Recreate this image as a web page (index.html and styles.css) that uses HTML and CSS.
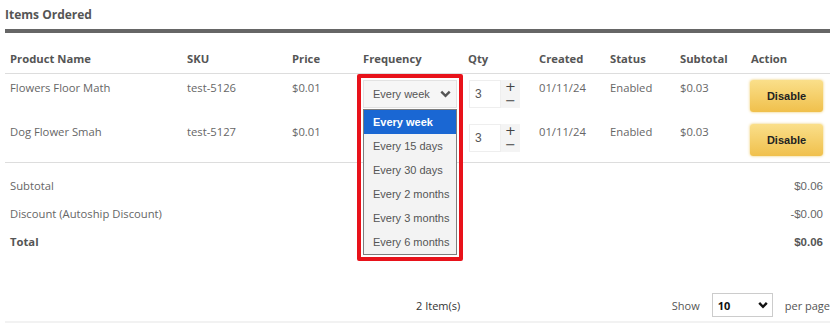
FILE: index.html
```html
<!DOCTYPE html>
<html lang="en">
<head>
    <meta charset="UTF-8">
    <meta name="viewport" content="width=device-width, initial-scale=1.0">
    <title>Items Ordered</title>
    <link rel="stylesheet" href="styles.css">
</head>
<body>

    <section class="items">
        <h2 class="items-title">Items Ordered</h2>

        <table class="items-table">
            <colgroup>
                <col style="width: 177px">
                <col style="width: 105px">
                <col style="width: 71px">
                <col style="width: 105px">
                <col style="width: 71px">
                <col style="width: 71px">
                <col style="width: 70px">
                <col style="width: 71px">
                <col style="width: 84px">
            </colgroup>
            <thead>
                <tr>
                    <th>Product Name</th>
                    <th>SKU</th>
                    <th>Price</th>
                    <th>Frequency</th>
                    <th>Qty</th>
                    <th>Created</th>
                    <th>Status</th>
                    <th>Subtotal</th>
                    <th>Action</th>
                </tr>
            </thead>
            <tbody>
                <tr>
                    <td>Flowers Floor Math</td>
                    <td>test-5126</td>
                    <td>$0.01</td>
                    <td class="freq-cell">
                        <div class="freq-pick">
                            <div class="freq-select">
                                <span>Every week</span>
                                <svg width="11" height="8" viewBox="0 0 11 8"><path d="M1.3 1.6 L5.5 5.8 L9.7 1.6" fill="none" stroke="#555" stroke-width="2.4"/></svg>
                            </div>
                            <ul class="freq-list">
                                <li class="active">Every week</li>
                                <li>Every 15 days</li>
                                <li>Every 30 days</li>
                                <li>Every 2 months</li>
                                <li>Every 3 months</li>
                                <li>Every 6 months</li>
                            </ul>
                            <div class="highlight"></div>
                        </div>
                    </td>
                    <td class="qty-cell">
                        <div class="qty">
                            <span class="qty-input">3</span>
                            <span class="qty-step"><span>+</span><span>&minus;</span></span>
                        </div>
                    </td>
                    <td>01/11/24</td>
                    <td>Enabled</td>
                    <td>$0.03</td>
                    <td class="action-cell"><button class="btn-disable">Disable</button></td>
                </tr>
                <tr>
                    <td>Dog Flower Smah</td>
                    <td>test-5127</td>
                    <td>$0.01</td>
                    <td></td>
                    <td class="qty-cell">
                        <div class="qty">
                            <span class="qty-input">3</span>
                            <span class="qty-step"><span>+</span><span>&minus;</span></span>
                        </div>
                    </td>
                    <td>01/11/24</td>
                    <td>Enabled</td>
                    <td>$0.03</td>
                    <td class="action-cell"><button class="btn-disable">Disable</button></td>
                </tr>
            </tbody>
        </table>

        <div class="totals">
            <div class="totals-row"><span>Subtotal</span><span class="amount">$0.06</span></div>
            <div class="totals-row"><span>Discount (Autoship Discount)</span><span class="amount">-$0.00</span></div>
            <div class="totals-row total"><span>Total</span><span class="amount">$0.06</span></div>
        </div>

        <div class="pager">
            <span class="pager-count">2 Item(s)</span>
            <div class="pager-size">
                <span>Show</span>
                <div class="pager-select">
                    <span>10</span>
                    <svg width="10" height="8" viewBox="0 0 10 8"><path d="M1.2 1.8 L5 5.8 L8.8 1.8" fill="none" stroke="#111" stroke-width="2.4"/></svg>
                </div>
                <span>per page</span>
            </div>
        </div>
        <div class="bottom-band"></div>
    </section>

</body>
</html>
```

FILE: styles.css
```css
body {
    font-family: "Open Sans", Arial, sans-serif;
    margin: 0;
    padding: 0;
    color: #666;
    background: #fff;
    font-size: 11.25px;
}

.items {
    padding: 0 8px 0 5px;
}

.items-title {
    margin: 0;
    font-size: 12px;
    font-weight: bold;
    line-height: 29px;
    color: #555;
    border-bottom: 4px solid #666;
}

.items-table {
    width: 825px;
    table-layout: fixed;
    border-collapse: collapse;
}

.items-table th {
    text-align: left;
    font-weight: bold;
    color: #555;
    padding: 18px 0 6px 5px;
    line-height: 16px;
    border-bottom: 1px solid #ddd;
}

.items-table td {
    vertical-align: top;
    padding: 6px 0 0 5px;
    height: 38px;
    line-height: 16px;
    white-space: nowrap;
}

.items-table tbody tr:last-child td {
    border-bottom: 1px solid #ddd;
}

.freq-pick {
    position: relative;
    width: 94px;
}

.freq-select {
    height: 26px;
    border: 1px solid #e2e2e2;
    background: #f6f6f6;
    display: flex;
    align-items: center;
    justify-content: space-between;
    padding: 0 5px 0 9px;
    font-family: Arial, "Liberation Sans", sans-serif;
    color: #555;
    font-size: 11px;
}

.freq-list {
    position: absolute;
    left: 0;
    top: 29px;
    width: 92px;
    margin: 0;
    padding: 0;
    list-style: none;
    border: 1px solid #7d7d7d;
    background: #f3f3f3;
    z-index: 2;
    font-family: Arial, "Liberation Sans", sans-serif;
    color: #555;
    font-size: 11px;
}

.freq-list li {
    height: 24px;
    line-height: 24px;
    padding-left: 9px;
}

.freq-list li.active {
    background: #1a67d3;
    color: #fff;
    font-weight: bold;
}

.highlight {
    position: absolute;
    left: -6px;
    top: -6px;
    width: 98px;
    height: 179px;
    border: 4px solid #e8121a;
    border-radius: 2px;
    z-index: 3;
}

.qty-cell {
    padding-left: 6px !important;
}

.qty {
    display: flex;
    height: 28px;
}

.qty-input {
    width: 25px;
    height: 26px;
    border: 1px solid #eee;
    background: #fff;
    padding-left: 5px;
    line-height: 26px;
    font-family: Arial, "Liberation Sans", sans-serif;
    font-size: 12px;
    color: #555;
}

.qty-step {
    width: 19px;
    padding: 1px 0;
    box-sizing: border-box;
    background: #f4f4f4;
    display: flex;
    flex-direction: column;
    justify-content: space-between;
    align-items: center;
    font-family: "DejaVu Sans", Arial, sans-serif;
    font-size: 13px;
    line-height: 12px;
    color: #444;
}

.action-cell {
    padding-left: 4px !important;
}

.btn-disable {
    width: 73px;
    height: 32px;
    border: none;
    border-radius: 3px;
    background: linear-gradient(#fadf8a, #f0c04c);
    box-shadow: 0 0 3px #ecc865;
    font-family: Arial, "Liberation Sans", sans-serif;
    font-weight: bold;
    font-size: 11px;
    color: #222;
    cursor: pointer;
}

.totals {
    padding: 9px 7px 0 5px;
}

.totals-row {
    display: flex;
    justify-content: space-between;
    line-height: 28px;
}

.totals-row .amount {
    font-family: Arial, "Liberation Sans", sans-serif;
    font-size: 11.5px;
}

.totals-row.total {
    font-weight: bold;
    color: #555;
}

.pager {
    margin-top: 35px;
    height: 28px;
    display: flex;
    align-items: center;
    position: relative;
    font-size: 11px;
    color: #555;
}

.pager-count {
    position: absolute;
    left: 411px;
    color: #333;
}

.pager-size {
    margin-left: auto;
    display: flex;
    align-items: center;
    gap: 12px;
}

.pager-select {
    width: 50px;
    height: 22px;
    border: 1px solid #ccc;
    display: flex;
    align-items: center;
    justify-content: space-between;
    padding: 0 4px 0 5px;
    color: #111;
    font-weight: bold;
}

.bottom-band {
    margin-top: 2px;
    height: 6px;
    background: #f2f2f2;
}
```
